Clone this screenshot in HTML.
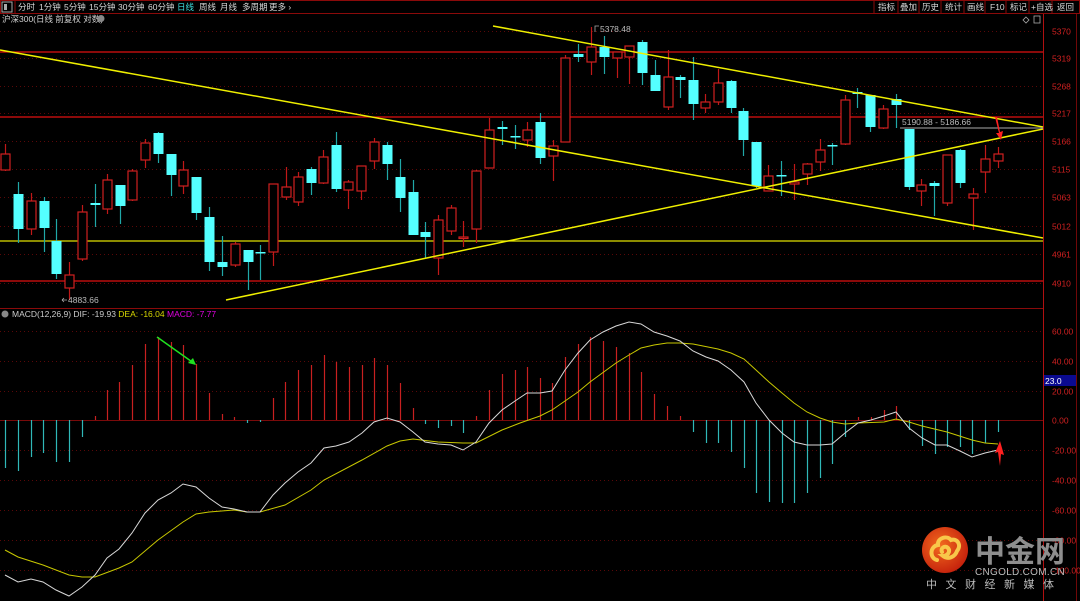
<!DOCTYPE html>
<html><head><meta charset="utf-8">
<style>
html,body{margin:0;padding:0;background:#000;width:1080px;height:601px;overflow:hidden}
svg{display:block}
text{font-family:"Liberation Sans","Noto Sans CJK SC",sans-serif}
</style></head><body>
<svg id="s" width="1080" height="601" viewBox="0 0 1080 601" xmlns="http://www.w3.org/2000/svg">
<rect width="1080" height="601" fill="#000"/>
<rect x="0.5" y="0.5" width="1079" height="13" fill="#000" stroke="#8a0a0a"/>
<rect x="2" y="2" width="10" height="10" fill="none" stroke="#aaa"/>
<rect x="4" y="4" width="3" height="6" fill="#aaa"/>
<line x1="15" y1="0" x2="15" y2="14" stroke="#8a0a0a"/>
<g font-size="8.5" fill="#d8d8d8">
<text x="18" y="10">分时</text><text x="39" y="10">1分钟</text><text x="64" y="10">5分钟</text>
<text x="89" y="10">15分钟</text><text x="118" y="10">30分钟</text><text x="148" y="10">60分钟</text>
<text x="177" y="10" fill="#3fe0e0">日线</text><text x="199" y="10">周线</text><text x="220" y="10">月线</text>
<text x="242" y="10">多周期</text><text x="269" y="10">更多 ›</text>
</g>
<g stroke="#8a0a0a"><line x1="874" y1="0" x2="874" y2="14"/><line x1="898" y1="0" x2="898" y2="14"/><line x1="919" y1="0" x2="919" y2="14"/><line x1="941" y1="0" x2="941" y2="14"/><line x1="964" y1="0" x2="964" y2="14"/><line x1="985" y1="0" x2="985" y2="14"/><line x1="1006" y1="0" x2="1006" y2="14"/><line x1="1029" y1="0" x2="1029" y2="14"/><line x1="1052" y1="0" x2="1052" y2="14"/></g>
<g font-size="8.5" fill="#d8d8d8">
<text x="878" y="10">指标</text><text x="900" y="10">叠加</text><text x="922" y="10">历史</text><text x="945" y="10">统计</text><text x="967" y="10">画线</text><text x="990" y="10">F10</text><text x="1010" y="10">标记</text><text x="1031" y="10">+自选</text><text x="1057" y="10">返回</text>
</g>
<text x="2" y="22" font-size="8.5" fill="#d0d0d0">沪深300(日线 前复权 对数)</text>
<circle cx="101" cy="18.5" r="3.5" fill="#888"/>
<path d="M1026 17l3 3-3 3-3-3z" fill="none" stroke="#aaa" stroke-width="0.8"/>
<rect x="1034" y="16" width="6" height="7" fill="none" stroke="#aaa" stroke-width="0.8"/>
<g id="g"></g>
</svg>
<script>
var ns="http://www.w3.org/2000/svg",G=document.getElementById('g');
function el(t,a,txt){var e=document.createElementNS(ns,t);for(var k in a)e.setAttribute(k,a[k]);if(txt!=null)e.textContent=txt;G.appendChild(e);return e;}
el('line',{x1:1043.5,y1:14,x2:1043.5,y2:601,stroke:'#b01010'});
el('line',{x1:1076.5,y1:14,x2:1076.5,y2:601,stroke:'#700808'});
el('line',{x1:0,y1:308.5,x2:1043,y2:308.5,stroke:'#8a0a0a'});
var pl=[[5370,31],[5319,58],[5268,86],[5217,113],[5166,141],[5115,169],[5063,197],[5012,226],[4961,254],[4910,283]];
pl.forEach(function(p){el('line',{x1:0,y1:p[1]+.5,x2:1043,y2:p[1]+.5,stroke:'#5a0808','stroke-dasharray':'1 3'});
el('text',{x:1052,y:p[1]+3.5,'font-size':'8.5',fill:'#d02020'},p[0]);});
var ml=[[60,331],[40,361],[20,391],[0,420],[-20,450],[-40,480],[-60,510],[-80,540],[-100,570]];
ml.forEach(function(p){el('line',{x1:0,y1:p[1]+.5,x2:1043,y2:p[1]+.5,stroke:'#5a0808','stroke-dasharray':'1 3'});
el('text',{x:1052,y:p[1]+3.5,'font-size':'8.5',fill:'#d02020'},p[0].toFixed(2));});
el('line',{x1:0,y1:420.5,x2:1043,y2:420.5,stroke:'#7a0a0a'});
[52,117,281].forEach(function(y){el('line',{x1:0,y1:y,x2:1043,y2:y,stroke:'#e01010','stroke-width':1.2});});
el('line',{x1:0,y1:241,x2:1043,y2:241,stroke:'#e0e000','stroke-width':1.3});
var C=[[5,154,170,144,171,'r'],[18,194,229,182,243,'c'],[31,201,229,193,235,'r'],[44,201,228,197,252,'c'],[56,241,274,219,279,'c'],[69,275,288,262,300,'r'],[82,212,259,205,261,'r'],[95,203,205,184,227,'c'],[107,180,209,174,214,'r'],[120,185,206,185,224,'c'],[132,171,200,169,201,'r'],[145,143,160,139,168,'r'],[158,133,154,132,163,'c'],[171,154,175,154,196,'c'],[183,170,186,161,194,'r'],[196,177,213,177,220,'c'],[209,217,262,207,271,'c'],[222,262,267,236,276,'c'],[235,244,265,242,267,'r'],[248,250,262,250,290,'c'],[260,252,253,245,280,'c'],[273,184,252,184,266,'r'],[286,187,197,167,200,'r'],[298,177,202,172,206,'r'],[311,169,183,167,195,'c'],[323,157,183,150,184,'r'],[336,145,189,132,192,'c'],[348,182,190,180,209,'r'],[361,166,191,166,200,'r'],[374,142,161,138,169,'r'],[387,145,164,142,180,'c'],[400,177,198,159,212,'c'],[413,192,235,180,235,'c'],[425,232,237,222,258,'c'],[438,220,258,215,275,'r'],[451,208,231,205,235,'r'],[463,237,238,221,247,'r'],[476,171,229,170,243,'r'],[489,130,168,118,168,'r'],[502,127,129,121,145,'c'],[515,136,137,125,149,'c'],[527,130,140,122,147,'r'],[540,122,158,113,164,'c'],[553,146,156,140,181,'r'],[565,58,142,55,142,'r'],[578,54,57,44,62,'c'],[591,47,62,27,75,'r'],[604,47,57,36,74,'c'],[617,52,58,52,78,'r'],[629,46,57,46,84,'r'],[642,42,73,40,85,'c'],[655,75,91,60,91,'c'],[668,77,107,50,110,'r'],[680,77,80,75,98,'c'],[693,80,104,57,120,'c'],[705,102,108,94,113,'r'],[718,83,102,69,105,'r'],[731,81,108,80,113,'c'],[743,111,140,108,156,'c'],[756,142,186,142,188,'c'],[768,176,191,165,191,'r'],[781,175,176,161,196,'c'],[794,182,184,164,200,'r'],[807,164,174,163,185,'r'],[820,150,162,139,171,'r'],[832,145,146,143,165,'c'],[845,100,144,95,145,'r'],[857,92,94,88,108,'c'],[870,95,127,95,132,'c'],[883,109,128,105,129,'r'],[896,99,105,94,128,'c'],[909,129,187,129,190,'c'],[921,185,191,179,206,'r'],[934,183,186,181,216,'c'],[947,155,203,155,206,'r'],[960,150,183,149,188,'c'],[973,194,198,188,230,'r'],[985,159,172,145,193,'r'],[998,154,161,147,168,'r']];
C.forEach(function(c){var x=c[0],r=c[5]=='r';
var wc=r?'#c01818':'#20a8a8';
el('line',{x1:x+.5,y1:c[3],x2:x+.5,y2:c[4],stroke:wc,'stroke-width':1.2});
var h=Math.max(c[2]-c[1],1.5);
if(r)el('rect',{x:x-4,y:c[1],width:9,height:h,fill:'#000',stroke:'#d02020','stroke-width':1.2});
else el('rect',{x:x-4.5,y:c[1],width:10,height:h,fill:'#54ffff'});});
[[0,50,1043,238],[493,26,1043,127],[226,300,1043,129]].forEach(function(l){el('line',{x1:l[0],y1:l[1],x2:l[2],y2:l[3],stroke:'#f0f000','stroke-width':1.5});});
el('line',{x1:900,y1:128,x2:1043,y2:128,stroke:'#888','stroke-width':1.2});
el('text',{x:902,y:125,'font-size':'8.5',fill:'#bbb'},'5190.88 - 5186.66');
el('path',{d:'M995 117 L999 133 L996 133 L1001 140 L1003 131 L1000 132 L997 117Z',fill:'#ff2020'});
el('path',{d:'M595 32 v-6 h4 M595 26 l4 0',stroke:'#aaa',fill:'none','stroke-width':0.8});
el('text',{x:600,y:32,'font-size':'8.5',fill:'#bbb'},'5378.48');
el('path',{d:'M67 300 h-5 M62 300 l2 -2 M62 300 l2 2',stroke:'#aaa',fill:'none','stroke-width':0.8});
el('text',{x:68,y:303,'font-size':'8.5',fill:'#bbb'},'4883.66');
el('circle',{cx:5,cy:314,r:3.5,fill:'#888'});
var t=el('text',{x:12,y:317,'font-size':'8.5',fill:'#ccc'});
t.innerHTML='MACD(12,26,9) DIF: -19.93 <tspan fill="#d8d800">DEA: -16.04</tspan> <tspan fill="#e000e0">MACD: -7.77</tspan>';
var H=[[5,468],[18,471],[31,457],[43,453],[56,462],[69,462],[82,437],[95,416],[107,390],[119,382],[132,365],[145,344],[158,337],[171,342],[183,345],[196,364],[209,393],[222,414],[234,417],[247,423],[260,422],[273,398],[285,382],[298,370],[311,365],[324,355],[336,362],[349,367],[362,365],[374,358],[387,365],[400,383],[413,408],[425,424],[438,428],[451,426],[463,433],[476,416],[489,390],[502,374],[515,370],[527,367],[540,378],[552,383],[565,357],[578,344],[590,337],[603,341],[616,347],[629,353],[641,372],[654,394],[667,406],[680,416],[693,432],[706,443],[718,443],[731,452],[744,468],[756,493],[769,502],[782,503],[794,503],[807,493],[820,478],[832,464],[845,437],[858,417],[871,417],[884,410],[896,406],[909,430],[922,446],[935,454],[947,447],[960,447],[972,454],[985,443],[998,432]];
H.forEach(function(h){var up=h[1]<420;el('line',{x1:h[0]+.5,y1:420,x2:h[0]+.5,y2:h[1],stroke:up?'#c82020':'#30b8b8','stroke-width':1.2});});
el('path',{d:'M157 337 L195 364',stroke:'#20e020','stroke-width':1.5,fill:'none'});
el('path',{d:'M196 365 L188 363 L193 358Z',fill:'#20e020'});
var D='5,575 18,582 31,579 43,582 56,590 69,596 82,587 95,575 107,558 119,549 132,533 145,513 158,500 171,493 183,484 196,487 209,498 222,507 234,509 247,512 260,512 273,495 285,483 298,472 311,463 324,448 336,446 349,442 362,433 374,422 387,418 400,422 413,432 425,442 438,444 451,445 463,450 476,442 489,423 502,410 515,401 527,393 540,393 552,391 565,370 578,353 590,340 603,332 616,326 629,322 641,324 654,332 667,336 680,341 693,351 706,357 718,361 731,370 744,382 756,403 769,420 782,433 794,442 807,445 820,445 832,444 845,433 858,423 871,420 884,416 896,412 909,428 922,438 935,445 947,445 960,451 972,457 985,453 998,450';
var E='5,550 18,557 43,565 69,575 82,577 95,577 119,568 132,562 158,540 183,522 196,514 209,512 234,510 247,512 260,512 285,505 311,490 324,480 362,460 387,446 400,441 413,439 438,442 463,443 476,443 502,430 520,423 540,416 552,410 565,401 578,392 590,382 616,363 629,355 641,348 654,345 667,343 680,343 693,344 718,349 731,353 744,359 756,370 769,382 782,393 794,403 807,412 820,418 832,422 845,424 858,423 884,422 896,419 909,422 922,426 947,432 972,440 985,443 998,444';
el('polyline',{points:E,fill:'none',stroke:'#c8c800','stroke-width':1});
el('polyline',{points:D,fill:'none',stroke:'#d8d8d8','stroke-width':1});
el('rect',{x:1044,y:375,width:32,height:11,fill:'#0a0a90'});
el('text',{x:1045,y:384,'font-size':'8.5',fill:'#fff'},'23.0');
el('path',{d:'M1000 441 L1004 455 L1001 454 L1000 466 L998 452 L995 453Z',fill:'#ff2020'});
var df=document.createElementNS(ns,'defs');df.innerHTML='<radialGradient id="lg" cx="40%" cy="40%" r="65%"><stop offset="0" stop-color="#f26a1e"/><stop offset="1" stop-color="#c4200c"/></radialGradient>';G.appendChild(df);
el('circle',{cx:945,cy:550,r:23,fill:'url(#lg)'});
el('path',{d:'M937 560 C929 558 930 546 938 545 C937 538 947 535 951 540 C957 538 962 545 957 551 C955 557 948 560 943 556 C947 556 951 552 948 548 C945 545 940 548 942 552',fill:'none',stroke:'#f8c84a','stroke-width':4,'stroke-linecap':'round'});
el('text',{x:975,y:562,'font-size':'30','font-weight':'bold',fill:'#8e8e8e'},'中金网');
el('text',{x:975,y:575,'font-size':'10',fill:'#bbb','letter-spacing':'0.3'},'CNGOLD.COM.CN');
el('text',{x:926,y:588,'font-size':'11',fill:'#bbb','letter-spacing':'8.5'},'中文财经新媒体');
</script>
</body></html>
